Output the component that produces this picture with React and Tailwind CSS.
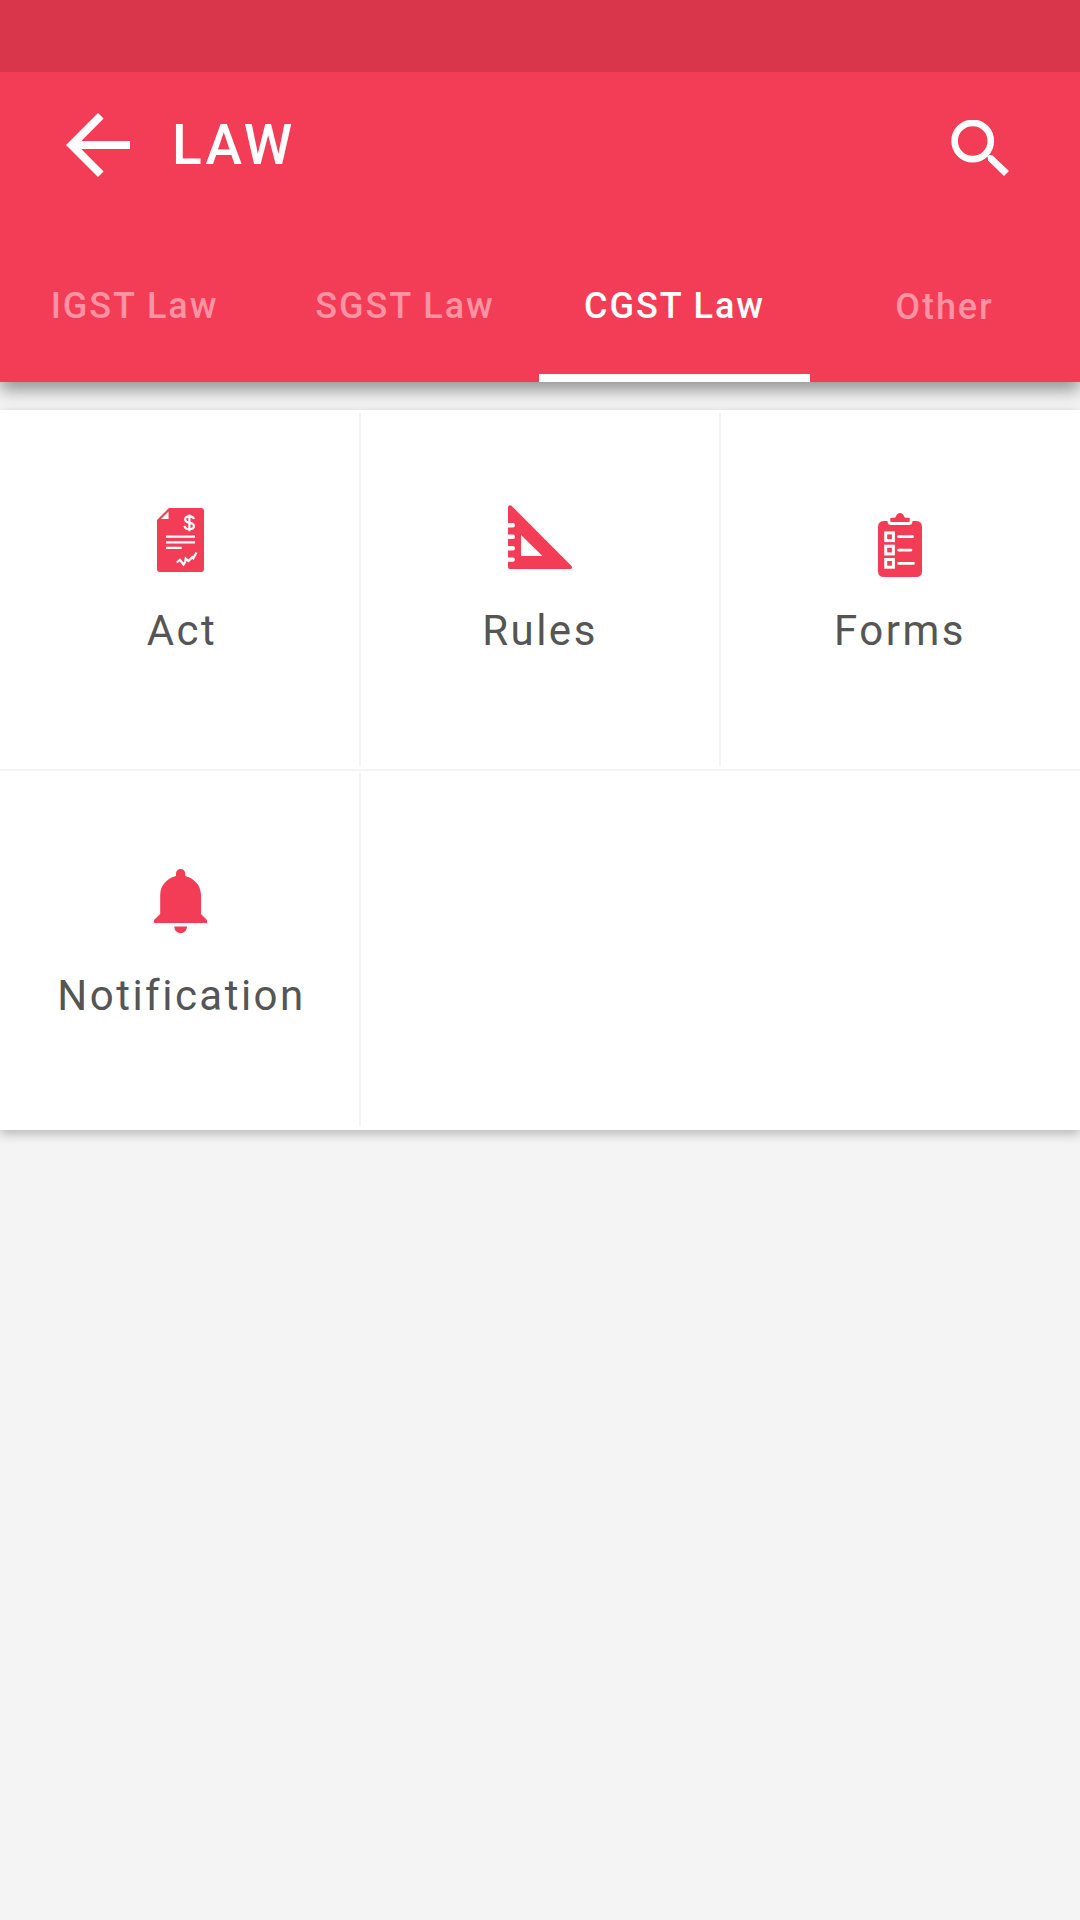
const tabs = [
  { name: 'IGST Law', box: 'w-[270px] pr-[1px]' },
  { name: 'SGST Law', box: 'w-[269px] pl-[1px]' },
  { name: 'CGST Law', box: 'w-[271px]', active: true },
  { name: 'Other', box: 'w-[270px] pt-[1px] pr-[1px]' },
];

function ArrowIcon() {
  return (
    <svg className="block h-16 w-16" viewBox="0 0 64 64" fill="#fff">
      <path d="M64 28H15.3L37.6 5.6 32 0 0 32 32 64 37.6 58.4 15.3 36H64Z" />
    </svg>
  );
}

function SearchIcon() {
  return (
    <svg className="block h-14 w-[58px]" viewBox="0 0 58 56" fill="none" stroke="#fff">
      <circle cx="21.7" cy="21" r="18.1" strokeWidth="6.6" />
      <path d="M36.5 36 L38.5 35 L41.5 35.5 L58 51 L53 56 L37 40.5 Z" fill="#fff" stroke="none" />
    </svg>
  );
}

function ActIcon() {
  return (
    <svg className="block h-16 w-[47px]" viewBox="0 0 47 64" fill="#f33c55">
      <path d="M12 0H44Q47 0 47 3V61Q47 64 44 64H3Q0 64 0 61V12Z" />
      <path d="M11.5 3.5V11H4Z" fill="#fff" />
      <g fill="none" stroke="#fff" strokeWidth="2.2">
        <path d="M9 28.7H38M9 34.3H38M9 39.8H24.7" />
        <path d="M36.8 11.2C36.5 8.7 34.7 8.4 32.4 8.4C29.7 8.4 28.2 9.5 28.2 11.4C28.2 13.4 29.7 14.1 32.4 14.6C35.5 15.2 36.9 16.2 36.9 18C36.9 20 35 21.2 32.4 21.2C29.6 21.2 27.8 20.3 27.5 17.9M32.4 6.5V23.2" />
        <path d="M19.7 54.5L23 51.8L26.5 56.5L28.2 54L28.7 50.6L31.5 53L35.2 49.2L36.2 50.3L39.5 44.5" />
      </g>
    </svg>
  );
}

function RulesIcon() {
  return (
    <svg className="block h-16 w-16" viewBox="0 0 64 64">
      <path fill="#f33c55" d="M0 1.5Q1.7-.8 3.5.8L63.5 61Q65 64 62 64H2Q0 64 0 62Z" />
      <path fill="#fff" d="M13 30V51H34.5Z" />
      <path stroke="#fff" strokeWidth="4.4" strokeLinecap="round" d="M-2 20.3H4.8M-2 31.8H4.8M-2 43.2H4.8M-2 54.6H4.8" />
    </svg>
  );
}

function FormsIcon() {
  return (
    <svg className="block h-16 w-11" viewBox="0 0 44 64">
      <path fill="#f33c55" d="M6 8H9.5C9.5 11 11 12 13.5 12H30.5C33 12 34.5 11 34.5 8H38Q44 8 44 14V58Q44 64 38 64H6Q0 64 0 58V14Q0 8 6 8Z" />
      <path fill="#f33c55" d="M12.3 5.5Q12.3 4.8 13 4.8H16Q17.3 4.8 18 3.2Q19.3 0 22 0Q24.7 0 26 3.2Q26.7 4.8 28 4.8H31Q31.7 4.8 31.7 5.5V8Q31.7 9 30.7 9H13.3Q12.3 9 12.3 8Z" />
      <g fill="none" stroke="#fff" strokeWidth="3">
        <rect x="7.7" y="19.9" width="7.7" height="7.7" />
        <rect x="7.7" y="33.2" width="7.7" height="7.7" />
        <rect x="7.7" y="46.5" width="7.7" height="7.7" />
        <path d="M20.5 23.7H34.5M20.5 37.1H33M20.5 50.4H35.5" strokeLinecap="round" strokeWidth="2.7" />
      </g>
    </svg>
  );
}

function BellIcon() {
  return (
    <svg className="block h-16 w-[53px]" viewBox="0 0 53 64" fill="#f33c55">
      <path d="M22 7V4.6A4.6 4.6 0 0 1 31.2 4.6V7C40 9 47 16.5 47 26V45L53 51V54H0V51L6.2 45V26C6.2 16.5 13.2 9 22 7Z" />
      <path d="M20.2 57.5H33C33 61.3 30.2 64 26.6 64S20.2 61.3 20.2 57.5Z" />
    </svg>
  );
}

const cells = [
  { label: 'Act', icon: ActIcon, pad: 'pt-[98px]', text: 'mt-[34px] pl-[4px]', rule: true },
  { label: 'Rules', icon: RulesIcon, pad: 'pt-[95px]', text: 'mt-[37px]', rule: true },
  { label: 'Forms', icon: FormsIcon, pad: 'pt-[103px]', text: 'mt-[29px]' },
  { label: 'Notification', icon: BellIcon, pad: 'pt-[99px]', text: 'mt-[38px] pl-[3px]', rule: true },
];

export default function App() {
  return (
    <div className="flex h-[1920px] w-[1080px] flex-col overflow-hidden bg-[#f4f4f4] font-['Roboto',sans-serif]">
      <header className="relative z-10 flex h-[382px] shrink-0 flex-col bg-[#f33c55] shadow-[0_8px_16px_rgba(0,0,0,0.4)]">
        <div className="h-[72px] bg-[#d9354b]" />
        <div className="flex h-[146px] items-center pr-[71px] pl-[66px]">
          <ArrowIcon />
          <h1 className="ml-[42px] grow text-[55px] leading-[64px] font-medium tracking-[3.3px] text-white">LAW</h1>
          <div className="pt-[5px]">
            <SearchIcon />
          </div>
        </div>
        <nav className="flex grow">
          {tabs.map((t) => (
            <div key={t.name} className={'relative flex justify-center ' + t.box}>
              <span
                className={
                  'mt-[67px] text-[36px] leading-[42px] font-medium tracking-[1.95px] whitespace-nowrap ' +
                  (t.active ? 'text-white' : 'text-[#ff93a3]')
                }
              >
                {t.name}
              </span>
              {t.active && <div className="absolute inset-x-0 bottom-0 h-2 bg-white" />}
            </div>
          ))}
        </nav>
      </header>
      <main className="relative mt-7 grid h-[720px] shrink-0 grid-cols-3 grid-rows-2 bg-white shadow-[0_4px_10px_rgba(0,0,0,0.25)]">
        {cells.map(({ label, icon: Icon, pad, text, rule }) => (
          <div key={label} className={'relative flex flex-col items-center ' + pad}>
            <Icon />
            <span className={'text-[42px] leading-[50px] tracking-[2.48px] text-[#555555] ' + text}>{label}</span>
            {rule && <div className="absolute top-[3px] -right-px bottom-[4px] w-[2px] bg-[#f4f4f4]" />}
          </div>
        ))}
        <div className="absolute inset-x-0 top-[359px] h-[2px] bg-[#f4f4f4]" />
      </main>
    </div>
  );
}
